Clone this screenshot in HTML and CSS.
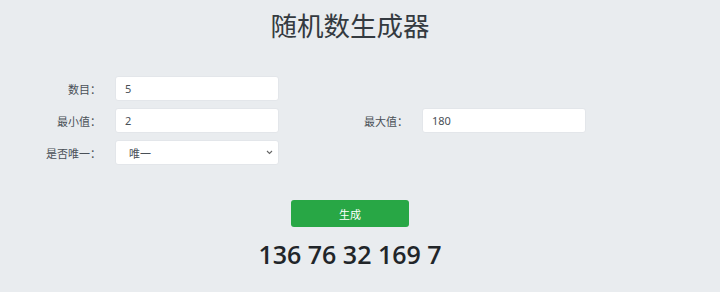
FILE: index.html
```html
<!DOCTYPE html>
<html lang="zh">
<head>
<meta charset="utf-8">
<link rel="stylesheet" href="styles.css">
</head>
<body>
<div class="page">
  <h1 class="title">随机数生成器</h1>
  <form class="form">
    <div class="field">
      <label class="label">数目：</label>
      <input class="control" type="text" value="5">
    </div>
    <div class="field"></div>
    <div class="field">
      <label class="label">最小值：</label>
      <input class="control" type="text" value="2">
    </div>
    <div class="field">
      <label class="label">最大值：</label>
      <input class="control" type="text" value="180">
    </div>
    <div class="field">
      <label class="label">是否唯一：</label>
      <div class="select-wrap">
        <select class="control select"><option>唯一</option></select>
        <svg class="chevron" width="7" height="5" viewBox="0 0 7 5"><path d="M1 1 L3.5 3.5 L6 1" fill="none" stroke="#666" stroke-width="1.1"/></svg>
      </div>
    </div>
  </form>
  <div class="actions">
    <button class="btn" type="button">生成</button>
  </div>
  <div class="result">136 76 32 169 7</div>
</div>
</body>
</html>
```
FILE: styles.css
```css
html, body {
  margin: 0;
  padding: 0;
  background: #e9ecef;
}
body {
  font-family: "Noto Sans", "Noto Sans CJK SC", sans-serif;
  color: #212529;
}
.page {
  width: 700px;
  padding-top: 9px;
}
.title {
  margin: 0;
  text-align: center;
  font-family: "Noto Sans CJK SC", sans-serif;
  font-weight: 400;
  font-size: 26.5px;
  line-height: 32px;
  color: #343a40;
}
.form {
  margin-top: 35px;
  display: grid;
  grid-template-columns: 279px 279px;
  column-gap: 28px;
  row-gap: 7px;
}
.field {
  display: grid;
  grid-template-columns: 101px 164px;
  column-gap: 14px;
  align-items: center;
  height: 25px;
}
.label {
  text-align: right;
  font-family: "Noto Sans CJK SC", sans-serif;
  font-size: 11px;
  color: #495057;
  white-space: nowrap;
}
.control {
  box-sizing: border-box;
  width: 164px;
  height: 25px;
  margin: 0;
  padding: 0 9px;
  border: 1px solid #e3e6ea;
  border-radius: 3px;
  background: #fff;
  font-family: "Noto Sans", "Noto Sans CJK SC", sans-serif;
  font-size: 11px;
  color: #495057;
  outline: none;
}
.select-wrap {
  position: relative;
  width: 164px;
  height: 25px;
}
.select {
  appearance: none;
  -webkit-appearance: none;
  padding-left: 13px;
  font-family: "Noto Sans CJK SC", sans-serif;
}
.chevron {
  position: absolute;
  right: 6px;
  top: 10px;
  pointer-events: none;
}
.actions {
  margin-top: 35px;
  display: flex;
  justify-content: center;
}
.btn {
  width: 118px;
  height: 27px;
  margin: 0;
  padding: 0;
  border: none;
  border-radius: 3px;
  background: #28a745;
  color: #fff;
  font-family: "Noto Sans CJK SC", sans-serif;
  font-size: 11px;
}
.result {
  margin-top: 9px;
  text-align: center;
  font-family: "Open Sans", sans-serif;
  font-weight: 600;
  font-size: 25px;
  line-height: 36px;
  color: #212529;
}
```
